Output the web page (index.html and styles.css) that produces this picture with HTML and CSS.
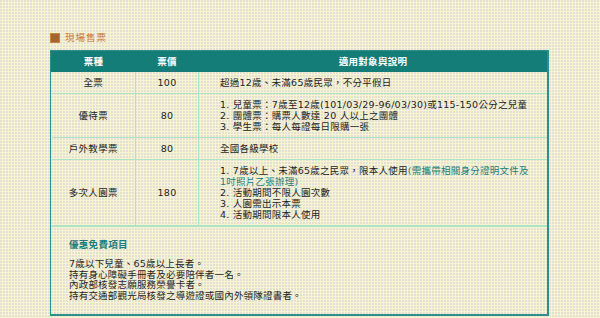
FILE: index.html
```html
<!DOCTYPE html>
<html lang="zh-Hant">
<head>
<meta charset="utf-8">
<link rel="stylesheet" href="styles.css">
</head>
<body>
<div class="page">
  <div class="title"><span class="title-icon"></span><span class="title-text">現場售票</span></div>
  <div class="box">
    <table class="tickets">
      <colgroup><col class="c1"><col class="c2"><col class="c3"></colgroup>
      <thead>
        <tr><th>票種</th><th>票價</th><th>適用對象與說明</th></tr>
      </thead>
      <tbody>
        <tr class="r1"><td class="ctr">全票</td><td class="ctr">100</td><td class="desc">超過12歲、未滿65歲民眾，不分平假日</td></tr>
        <tr class="r2"><td class="ctr">優待票</td><td class="ctr">80</td><td class="desc">1. 兒童票：7歲至12歲(101/03/29-96/03/30)或115-150公分之兒童<br>2. 團體票：購票人數達 20 人以上之團體<br>3. 學生票：每人每證每日限購一張</td></tr>
        <tr class="r3"><td class="ctr">戶外教學票</td><td class="ctr">80</td><td class="desc">全國各級學校</td></tr>
        <tr class="r4"><td class="ctr">多次人園票</td><td class="ctr">180</td><td class="desc">1. 7歲以上、未滿65歲之民眾，限本人使用<span class="note">(需攜帶相關身分證明文件及<br>1吋照片乙張辦理)</span><br>2. 活動期間不限人園次數<br>3. 人園需出示本票<br>4. 活動期間限本人使用</td></tr>
      </tbody>
    </table>
    <div class="free">
      <div class="free-title">優惠免費項目</div>
      <div class="free-list">7歲以下兒童、65歲以上長者。<br>持有身心障礙手冊者及必要陪伴者一名。<br>內政部核發志願服務榮譽卡者。<br>持有交通部觀光局核發之導遊證或國內外領隊證書者。</div>
    </div>
  </div>
</div>
</body>
</html>
```
FILE: styles.css
```css
html, body {
  margin: 0;
  padding: 0;
}
body {
  background-color: #f7f4d2;
  background-image: radial-gradient(circle at 1px 1px, rgba(200,195,215,0.55) 0.6px, transparent 1px);
  background-size: 3px 3px;
  font-family: "DejaVu Sans", "Noto Sans CJK TC", sans-serif;
  color: #1e1e1e;
  font-size: 9.5px;
  width: 600px;
  height: 318px;
  overflow: hidden;
}
.page {
  padding: 32px 0 0 50px;
}
.title {
  display: flex;
  align-items: center;
  height: 11px;
  margin-bottom: 7px;
}
.title-icon {
  width: 10px;
  height: 10px;
  background: #a8642e;
  box-shadow: inset 0 0 0 1px #c8843e;
  margin-right: 5px;
}
.title-text {
  color: #cc7430;
  font-size: 9.5px;
  letter-spacing: 1px;
  line-height: 11px;
}
.box {
  width: 496px;
  border: 1px solid #2f8f8d;
  border-right-width: 2px;
  border-bottom-width: 2px;
}
.tickets {
  width: 100%;
  border-collapse: collapse;
  table-layout: fixed;
}
.c1 { width: 84px; }
.c2 { width: 63px; }
.tickets th {
  background: #157d77;
  color: #ffffff;
  font-weight: bold;
  height: 21px;
  padding: 0;
  line-height: 11px;
  letter-spacing: 0.3px;
  border-left: 1px solid #157d77;
}
.tickets td {
  border: 1px solid #ade2c6;
  padding: 5px 0;
  line-height: 11px;
  vertical-align: middle;
}
.tickets tr td:first-child { border-left: none; }
.tickets tr td:last-child { border-right: none; }
.tickets tbody tr:first-child td { border-top: none; }
.ctr {
  text-align: center;
  letter-spacing: 0.3px;
}
.desc {
  padding-left: 21px !important;
  padding-right: 4px !important;
  letter-spacing: 0.25px;
  white-space: nowrap;
}
.note {
  color: #17807c;
}
.free {
  border-top: 1px solid #ade2c6;
  padding: 12px 0 13px 18px;
  height: 62px;
}
.free-title {
  color: #17807c;
  font-weight: bold;
  line-height: 11px;
  letter-spacing: 0.3px;
  margin-bottom: 9px;
}
.free-list {
  line-height: 10.7px;
  letter-spacing: 0.2px;
}
```
